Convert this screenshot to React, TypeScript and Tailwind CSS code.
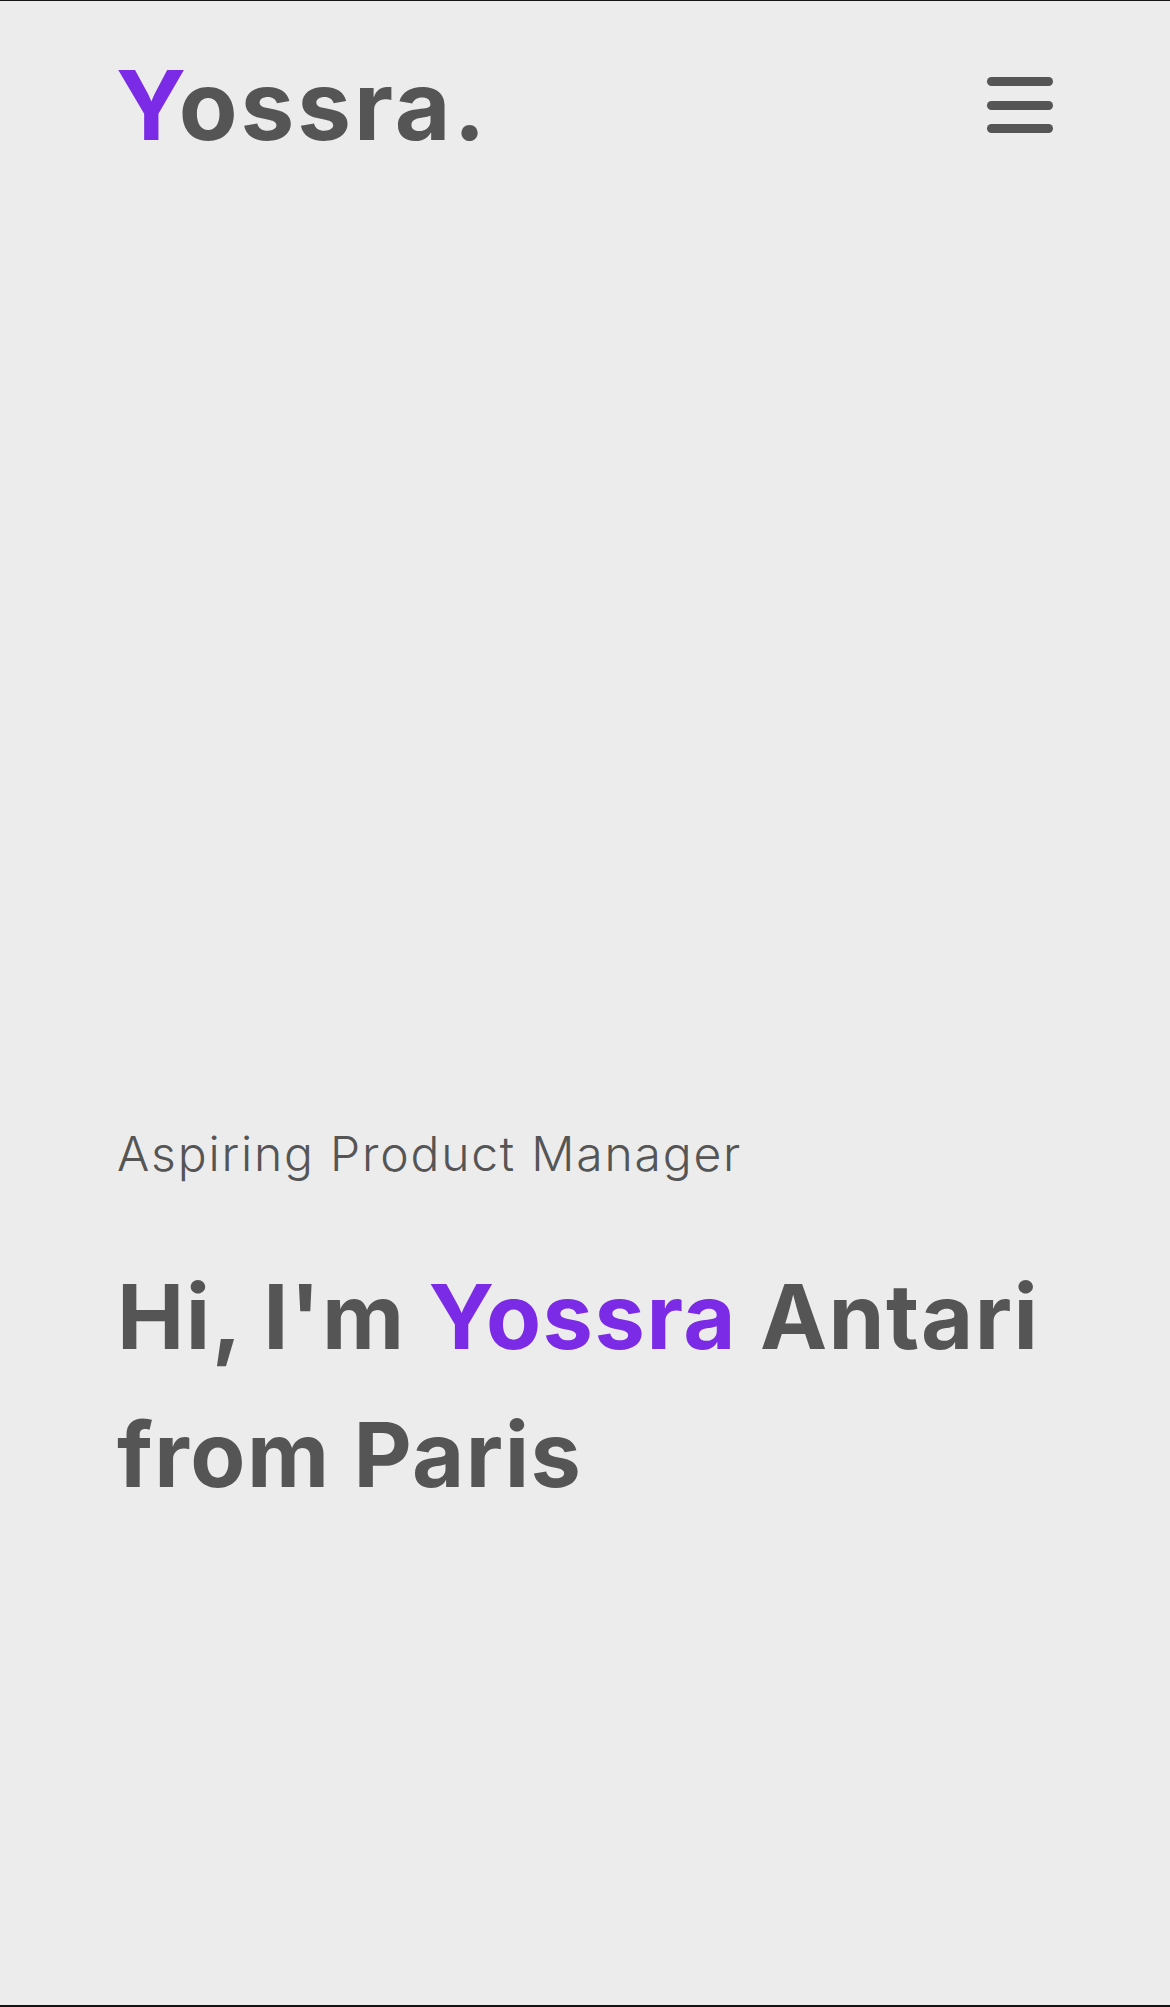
import React from "react";

export default function App() {
  return (
    <div
      className="h-[2007px] w-full bg-[#ececec] border-t border-b-2 border-[#141414] text-[#555555] overflow-hidden"
      style={{ fontFamily: "Inter, 'Noto Sans', sans-serif" }}
    >
      <header className="flex items-center justify-between pl-[116px] pr-[117px] pt-[56px]">
        <div className="text-[96px] leading-[96px] font-bold tracking-[3px]">
          <span className="text-[#7b2ae6]">Y</span>ossra.
        </div>
        <button aria-label="menu" className="flex flex-col gap-[14.5px]">
          <span className="block h-[9px] w-[66px] rounded-full bg-[#555555]" />
          <span className="block h-[9px] w-[66px] rounded-full bg-[#555555]" />
          <span className="block h-[9px] w-[66px] rounded-full bg-[#555555]" />
        </button>
      </header>
      <section className="pl-[117px] pr-[100px] mt-[977px]">
        <p className="text-[48px] leading-[48px] font-light tracking-[1.8px]">Aspiring Product Manager</p>
        <h1 className="mt-[70px] text-[90px] leading-[138px] font-bold tracking-[1.5px]">
          Hi, I'm <span className="text-[#7b2ae6]">Yossra</span> Antari
          <br />
          from Paris
        </h1>
      </section>
    </div>
  );
}
